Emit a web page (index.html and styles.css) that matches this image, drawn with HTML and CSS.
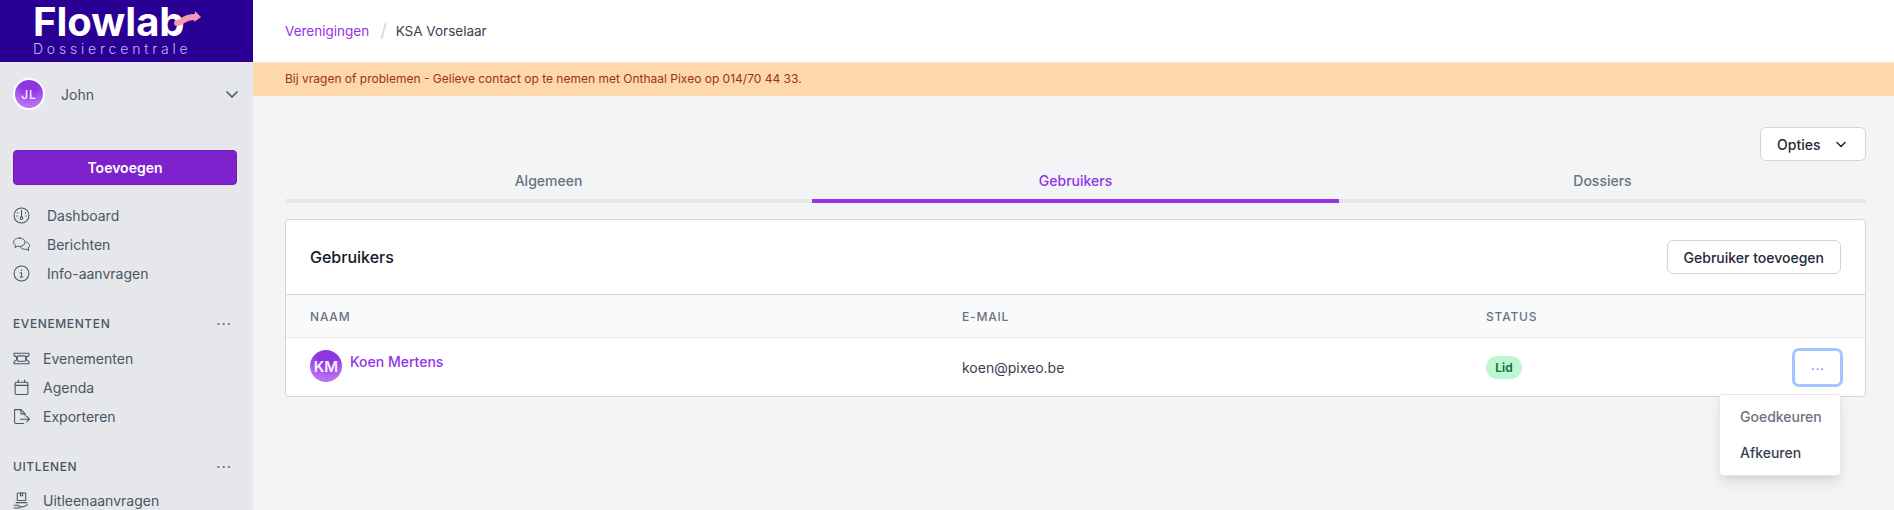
FILE: index.html
```html
<!DOCTYPE html>
<html lang="nl">
<head>
    <meta charset="UTF-8">
    <title>Flowlab</title>
    <link rel="stylesheet" href="styles.css">
</head>
<body>
<div class="app">
    <aside class="sidebar">
        <div class="logo">
            <div class="logo-name">Flowlab
                <svg class="logo-arrow" viewBox="0 0 32 18" width="32" height="18"><path d="M7 13C12 13 13 7 25 7" fill="none" stroke="#f49ab0" stroke-width="6" stroke-linecap="round"/><path d="M25 1l6 6-7 5z" fill="#f49ab0"/></svg>
            </div>
            <div class="logo-sub">Dossiercentrale</div>
        </div>

        <div class="user">
            <span class="avatar avatar-john">JL</span>
            <span class="user-name">John</span>
            <svg class="user-chevron" viewBox="0 0 20 20" width="20" height="20"><path d="M5 8l5 5 5-5" fill="none" stroke="#4b5563" stroke-width="1.6" stroke-linecap="round" stroke-linejoin="round"/></svg>
        </div>

        <button class="add-btn">Toevoegen</button>

        <ul class="nav nav-wide">
            <li><svg viewBox="0 0 16 16"><circle cx="8" cy="8" r="7"/><path d="M8 3v6M4 5.500h.5M12 5.500h-.5M3.500 8.500h.5M12.500 8.500H12"/><circle cx="8" cy="10.500" r="1.200"/></svg>Dashboard</li>
            <li><svg viewBox="0.5 1 17 14"><path d="M7 1.500c3 0 5.500 1.800 5.500 4.200S10 10 7 10c-.7 0-1.400-.1-2-.3L2.500 11l.5-2.300C1.800 7.800 1 6.800 1 5.700 1 3.300 4 1.500 7 1.500z"/><path d="M14 5.500c1.800.7 3 2 3 3.500 0 1-.5 1.900-1.300 2.500l.5 2.500-2.600-1.300c-2.200.5-4.300-.3-5.600-1.700"/></svg>Berichten</li>
            <li><svg viewBox="0 0 16 16"><circle cx="8" cy="8" r="7"/><path d="M6.800 7.300H8v4M6.800 11.300h2.400M8 4.600v.5"/></svg>Info-aanvragen</li>
        </ul>

        <div class="nav-title">Evenementen <span class="dots">···</span></div>
        <ul class="nav">
            <li><svg viewBox="0 0 16 16"><path d="M1 3h14v2.500a2.500 2.500 0 0 0 0 5V13H1v-2.500a2.500 2.500 0 0 0 0-5z"/><rect x="4" y="5.500" width="8" height="5" rx="1"/></svg>Evenementen</li>
            <li><svg viewBox="0 0 16 16"><rect x="2" y="3" width="12" height="11.500" rx="1"/><path d="M2 6h12M5 1v2M11 1v2"/></svg>Agenda</li>
            <li><svg viewBox="0 0 16 16"><path d="M10 14.500H2.500a1 1 0 0 1-1-1v-12h6l4 4v2M7.500 1.500v4h4M7 10.500h8.500M13 8l2.500 2.500L13 13"/></svg>Exporteren</li>
        </ul>

        <div class="nav-title nav-title-last">Uitlenen <span class="dots">···</span></div>
        <ul class="nav">
            <li><svg viewBox="0 0 16 16"><rect x="4" y="1" width="8" height="7" rx=".5"/><path d="M7 1v2.500h2V1M3 10h10M1 12.500h3.500l2 1.500h3l4-2M1 15h5"/></svg>Uitleenaanvragen</li>
        </ul>
    </aside>

    <div class="content">
        <div class="crumbs">
            <a class="crumb-link">Verenigingen</a>
            <span class="crumb-sep">/</span>
            <span>KSA Vorselaar</span>
        </div>
        <div class="notice">Bij vragen of problemen - Gelieve contact op te nemen met Onthaal Pixeo op 014/70 44 33.</div>

        <div class="main">
            <div class="options-row">
                <button class="btn btn-options">Opties
                    <svg viewBox="0 0 20 20" width="16" height="16"><path d="M5 8l5 5 5-5" fill="none" stroke="#1f2937" stroke-width="1.800" stroke-linecap="round" stroke-linejoin="round"/></svg>
                </button>
            </div>

            <div class="tabs">
                <div class="tab">Algemeen</div>
                <div class="tab tab-active">Gebruikers</div>
                <div class="tab">Dossiers</div>
            </div>

            <div class="card">
                <div class="card-head">
                    <h2>Gebruikers</h2>
                    <button class="btn">Gebruiker toevoegen</button>
                </div>
                <div class="row row-head">
                    <div>Naam</div>
                    <div>E-mail</div>
                    <div>Status</div>
                </div>
                <div class="row row-user">
                    <div class="user-cell">
                        <span class="avatar avatar-km">KM</span>
                        <a class="user-link">Koen Mertens</a>
                    </div>
                    <div class="mail">koen@pixeo.be</div>
                    <div><span class="badge">Lid</span></div>
                    <button class="more">···</button>
                </div>

                <div class="dropdown">
                    <div class="dropdown-item item-muted">Goedkeuren</div>
                    <div class="dropdown-item">Afkeuren</div>
                </div>
            </div>
        </div>
    </div>
</div>
</body>
</html>
```

FILE: styles.css
```css
* {
	box-sizing: border-box;
}

html, body {
	height: 100%;
}

body {
	margin: 0;
	overflow: hidden;
	font-family: Inter, "Liberation Sans", sans-serif;
	font-size: 14px;
	color: #374151;
	background-color: #f3f4f6;
}

.app {
	display: flex;
	height: 510px;
	overflow: hidden;
}

/* sidebar */
.sidebar {
	width: 253px;
	flex-shrink: 0;
	background-color: #e5e7eb;
	overflow: hidden;
}

.logo {
	height: 62px;
	background-color: #2a0094;
	padding: 2px 0 0 33px;
	color: #fff;
}

.logo-name {
	position: relative;
	width: 170px;
	height: 40px;
	font-weight: 700;
	font-size: 40px;
	line-height: 40px;
	letter-spacing: 0;
}

.logo-arrow {
	position: absolute;
	left: 137px;
	top: 8px;
}

.logo-sub {
	font-weight: 300;
	font-size: 14px;
	line-height: 14px;
	letter-spacing: 3.8px;
	color: #c4b5fd;
}

.user {
	display: flex;
	align-items: center;
	height: 64px;
	padding: 0 11px 0 13px;
	color: #4b5563;
	font-size: 14px;
}

.user-name {
	flex: 1;
	margin-left: 16px;
}

.avatar {
	display: inline-flex;
	align-items: center;
	justify-content: center;
	border-radius: 50%;
	flex-shrink: 0;
	color: #f7f0ff;
	background: radial-gradient(circle at 55% 0%, #8f35dd 0 35%, #a453ec 55%, #b870f3 80%);
}

.avatar-john {
	width: 32px;
	height: 32px;
	border: 2px solid #fff;
	font-size: 12px;
	font-weight: 500;
	letter-spacing: 1px;
}

.avatar-km {
	width: 32px;
	height: 32px;
	font-size: 15px;
	font-weight: 600;
}

.add-btn {
	display: block;
	width: 224px;
	height: 35px;
	margin: 24px 0 0 13px;
	padding: 0;
	border: 1px solid #6b21a8;
	border-radius: 4px;
	background-color: #7e22ce;
	color: #fff;
	font-family: inherit;
	font-size: 14px;
	font-weight: 600;
}

.nav {
	list-style-type: none;
	margin: 0;
	padding: 0 0 0 13px;
	color: #4b5563;
}

.nav li {
	display: flex;
	align-items: center;
	height: 29px;
}

.nav svg {
	width: 17px;
	height: 17px;
	margin-right: 13px;
	fill: none;
	stroke: #4b5563;
	stroke-width: 1;
	stroke-linecap: round;
	stroke-linejoin: round;
	flex-shrink: 0;
}

.nav-wide {
	margin-top: 16px;
}

.nav-wide svg {
	margin-right: 17px;
}

.nav-title {
	display: flex;
	justify-content: space-between;
	align-items: center;
	height: 20px;
	margin: 25px 0 11px;
	padding: 0 21px 0 13px;
	font-size: 12px;
	font-weight: 500;
	letter-spacing: 0.6px;
	text-transform: uppercase;
	color: #4b5563;
}

.nav-title-last {
	margin-bottom: 10px;
}

.dots {
	font-size: 14px;
	letter-spacing: 1px;
	color: #6b7280;
}

/* content */
.content {
	flex: 1;
	min-width: 0;
}

.crumbs {
	display: flex;
	align-items: center;
	height: 62px;
	padding: 0 0 1px 32px;
	background-color: #fff;
	color: #374151;
	font-size: 13.5px;
}

.crumb-link {
	color: #9333ea;
}

.crumb-sep {
	margin: 0 9px 0 11px;
	color: #d1d5db;
	font-size: 18px;
}

.notice {
	height: 34px;
	padding-left: 32px;
	line-height: 32px;
	background-color: #fed7aa;
	color: #9a3412;
	font-size: 12px;
	border-top: 1px solid #fde4c8;
}

.main {
	padding: 31px 28px 0 32px;
}

.options-row {
	display: flex;
	justify-content: flex-end;
}

.btn {
	height: 34px;
	padding: 0 16px;
	border: 1px solid #d1d5db;
	border-radius: 6px;
	background-color: #fff;
	color: #1f2937;
	font-family: inherit;
	font-size: 14px;
	font-weight: 450;
}

.btn-options {
	display: flex;
	align-items: center;
	justify-content: space-between;
	width: 106px;
}

.tabs {
	display: flex;
	margin-top: 5px;
}

.tab {
	flex: 1;
	height: 37px;
	line-height: 30px;
	text-align: center;
	border-bottom: 4px solid #e5e7eb;
	color: #6b7280;
	font-weight: 450;
}

.tab-active {
	border-bottom-color: #9333ea;
	color: #9333ea;
	font-weight: 500;
}

.card {
	position: relative;
	margin-top: 16px;
	background-color: #fff;
	border: 1px solid #d1d5db;
	border-radius: 4px;
}

.card-head {
	display: flex;
	align-items: center;
	justify-content: space-between;
	height: 75px;
	padding: 0 24px;
	border-bottom: 1px solid #d1d5db;
}

.card-head h2 {
	margin: 0;
	font-size: 16px;
	font-weight: 450;
	color: #111827;
}

.row {
	display: grid;
	grid-template-columns: 652px 524px 1fr;
	align-items: center;
	padding-left: 24px;
}

.row-head {
	height: 43px;
	background-color: #f9fafb;
	border-bottom: 1px solid #e5e7eb;
	font-size: 12px;
	font-weight: 500;
	letter-spacing: 0.8px;
	text-transform: uppercase;
	color: #6b7280;
}

.row-user {
	position: relative;
	height: 58px;
}

.user-cell {
	display: flex;
	align-items: flex-start;
	margin-top: -2px;
}

.user-link {
	margin: 3px 0 0 8px;
	color: #9333ea;
	font-weight: 500;
}

.mail {
	color: #374151;
}

.badge {
	display: inline-block;
	width: 36px;
	height: 23px;
	line-height: 23px;
	text-align: center;
	border-radius: 12px;
	background-color: #bbf7d0;
	color: #166534;
	font-size: 12px;
	font-weight: 600;
}

.more {
	position: absolute;
	right: 22px;
	top: 10px;
	width: 51px;
	height: 39px;
	padding: 0;
	border: 3px solid #a3c4fd;
	border-radius: 7px;
	background-color: #fff;
	color: #a855f7;
	font-size: 14px;
}

.dropdown {
	position: absolute;
	right: 24px;
	top: 174px;
	width: 122px;
	height: 82px;
	padding-top: 4px;
	background-color: #fff;
	border: 1px solid #e5e7eb;
	border-radius: 4px;
	box-shadow: 0 8px 14px -3px rgba(0, 0, 0, 0.12), 0 3px 6px -2px rgba(0, 0, 0, 0.06);
}

.dropdown-item {
	height: 36px;
	line-height: 36px;
	padding-left: 20px;
	color: #374151;
	font-weight: 450;
}

.item-muted {
	color: #6b7280;
}
```
